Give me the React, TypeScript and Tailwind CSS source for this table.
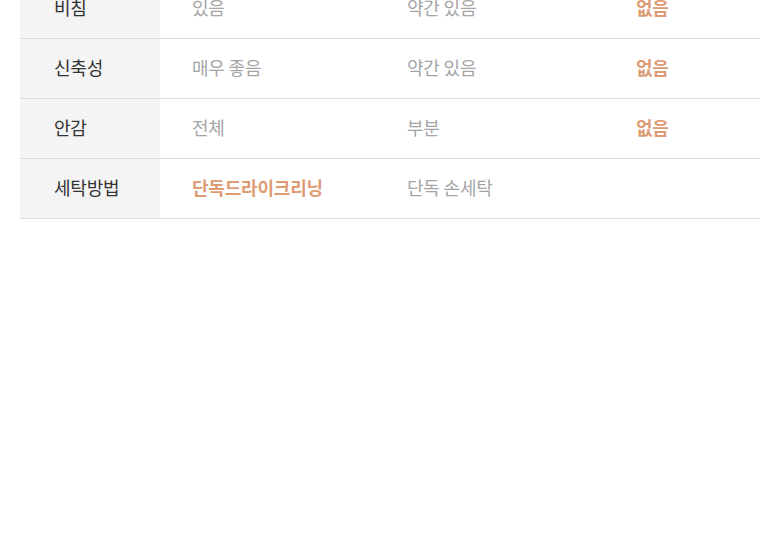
import React from 'react';

type Row = {
  label: string;
  values: string[];
  active: number;
};

const rows: Row[] = [
  { label: '비침', values: ['있음', '약간 있음', '없음'], active: 2 },
  { label: '신축성', values: ['매우 좋음', '약간 있음', '없음'], active: 2 },
  { label: '안감', values: ['전체', '부분', '없음'], active: 2 },
  { label: '세탁방법', values: ['단독드라이크리닝', '단독 손세탁', ''], active: 0 },
];

const App = () => {
  return (
    <div
      className="w-[780px] h-[551px] overflow-hidden bg-white"
      style={{ fontFamily: '"Noto Sans CJK KR", "Noto Sans", sans-serif' }}
    >
      <div className="mx-5 mt-[-21px]">
        {rows.map((row) => (
          <div
            key={row.label}
            className="grid grid-cols-[140px_215px_229px_1fr] h-[60px] border-b border-[#dedede] text-[18px] tracking-[-0.2px]"
          >
            <div className="bg-[#f4f4f4] flex items-center pl-[34px] pb-[3px] text-[#333333]">
              {row.label}
            </div>
            {row.values.map((v, i) => (
              <div
                key={i}
                className={
                  i === row.active
                    ? 'flex items-center pl-8 pb-[3px] text-[#dc9c74] font-bold'
                    : 'flex items-center pl-8 pb-[3px] text-[#a5a5a5]'
                }
              >
                {v}
              </div>
            ))}
          </div>
        ))}
      </div>
    </div>
  );
};

export default App;
